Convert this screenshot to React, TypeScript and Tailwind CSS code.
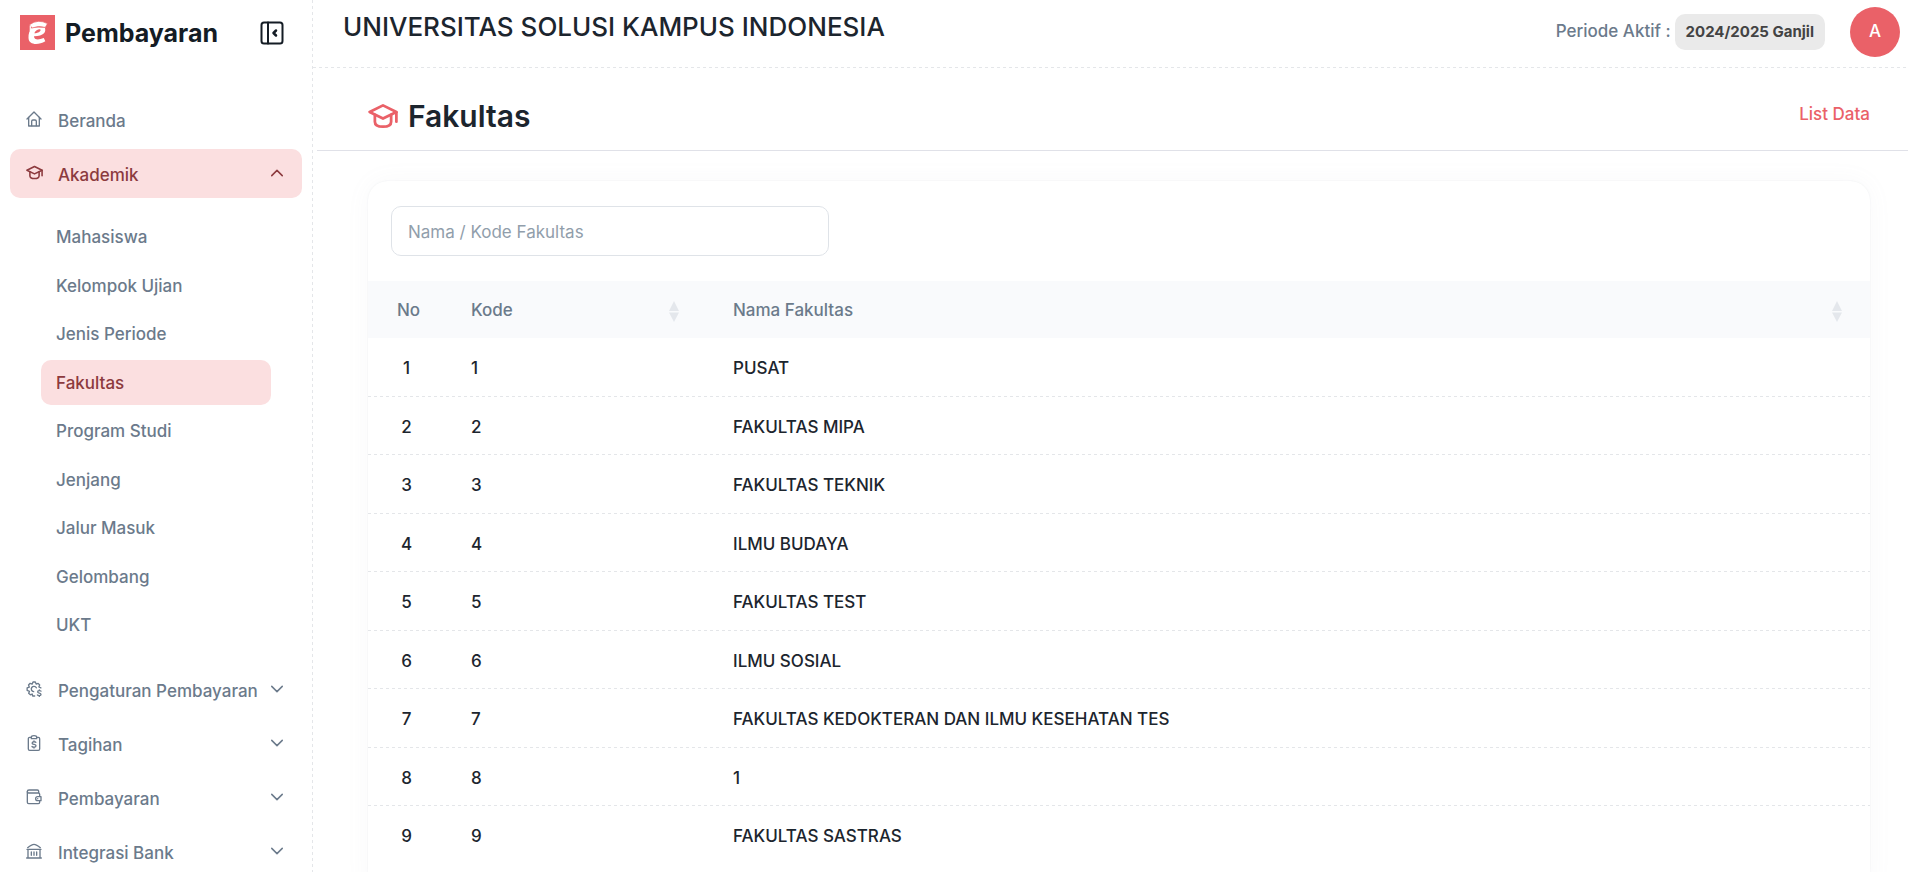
import { useState, type ReactNode } from "react";

function Svg({ className, width = 2, children }: { className: string; width?: number; children: ReactNode }) {
  return (
    <svg
      viewBox="0 0 24 24"
      className={className}
      fill="none"
      stroke="currentColor"
      strokeWidth={width}
      strokeLinecap="round"
      strokeLinejoin="round"
      aria-hidden="true"
    >
      {children}
    </svg>
  );
}

const HomeIcon = () => (
  <Svg className="size-4">
    <path d="M1.500 12 12 1.500 22.500 12" />
    <path d="M4 9.500V22.500h16V9.500" />
    <path d="M8.500 22V15.500q0-2 2-2h3q2 0 2 2V22" />
  </Svg>
);

const CapIcon = ({ className = "size-[17px]" }: { className?: string }) => (
  <Svg className={className} width={2.2}>
    <path d="M12 3.500 1.300 8.800 12 14l10.700-5.200z" />
    <path d="M5.500 11v5.500c0 2.800 3 4 6.500 4s6.500-1.200 6.500-4V11" />
    <path d="M22.700 9v7.500" />
  </Svg>
);

const GearMoneyIcon = () => (
  <Svg className="size-4">
    <path d="M13 22.500h-3l-.8-3-2.600 1.200-2.600-2.200 1.200-2.800-3.500-1.500v-4l3.300-1L3.800 6l2.400-2.500 3 1.200L10.500 1.500h3.500l1.200 3.200 3-1.200L20.500 6l-1.200 3 3 1.300" />
    <path d="M15.500 10.200a4 4 0 1 0-4 5.800" />
    <path d="M22.500 15.200c-1-1-5-1.200-5 1.200 0 2.200 5 1.300 5 3.700 0 2.300-4.200 2.200-5.300 1M20 13.300v1M20 22.500v1" />
  </Svg>
);

const ClipboardMoneyIcon = () => (
  <Svg className="size-4">
    <path d="M7.500 3.500H5.500a2 2 0 0 0-2 2V21a2 2 0 0 0 2 2h13a2 2 0 0 0 2-2V5.500a2 2 0 0 0-2-2h-2" />
    <path d="M8 5.500V3.500q0-2.500 4-2.500t4 2.500v2z" />
    <path d="M14.800 11c-1-1.300-5.600-1.300-5.600 1.200 0 2.600 5.800 1.400 5.800 4 0 2.500-4.800 2.500-6 1M12 8.800v1M12 18.500v1" />
  </Svg>
);

const WalletIcon = () => (
  <Svg className="size-4">
    <path d="M20.500 10V8a2 2 0 0 0-2-2H4a2 2 0 0 1-2-2.200C2 2.500 3 1.500 4.500 1.500H17a2 2 0 0 1 2 2V6" />
    <path d="M2 4v16a2 2 0 0 0 2 2h14.500a2 2 0 0 0 2-2v-1.500" />
    <path d="M22.500 11.500h-5a3 3 0 0 0 0 6h5zM17.500 14.500h.1" />
  </Svg>
);

const BankIcon = () => (
  <Svg className="size-4">
    <path d="M2.500 7Q5 4.800 9 2.800q3-1.600 6 0 4 2 6.500 4.200" />
    <path d="M1.500 9.500h21M3 9.500v12M21 9.500v12M1 22.500h22M8 13.500v5M12 13.500v5M16 13.500v5" />
  </Svg>
);

const Chevron = ({ up = false }: { up?: boolean }) => (
  <Svg className="size-[18px] shrink-0">{up ? <path d="m5 15.500 7-7 7 7" /> : <path d="m5 8.500 7 7 7-7" />}</Svg>
);

const BrandMark = () => (
  <svg viewBox="0 0 35 35" className="size-[35px] shrink-0" aria-hidden="true">
    <rect width="35" height="35" fill="#ea6168" />
    <path
      d="M24.800 12.500C26.500 17 24 21 14 21.200C14.200 24.800 18 25.300 23.800 23L25.300 26.300C18 30.500 8.800 30 8.500 23C8.300 19 9.500 15 12 12.500ZM14.300 18.300C18 18.300 21 16.500 20.500 14.800C20 13.600 15.500 14.800 14.300 18.300Z"
      fill="#fff"
      fillRule="evenodd"
    />
    <path
      d="M9.500 9.700Q18 3.500 27.500 8.600L25.300 12.400Q18 10.300 12 13Z"
      fill="#fff"
      stroke="#ea6168"
      strokeWidth="0.7"
    />
    <path d="M10.300 10.500v5.500" stroke="#fff" strokeWidth="1.200" />
  </svg>
);

const PanelIcon = () => (
  <Svg className="size-6">
    <rect x="1.500" y="1.500" width="21" height="21" rx="2.500" />
    <path d="M8 1.500v21" />
    <path d="m16 9.500-2.500 2.500 2.500 2.500" strokeWidth={2.5} />
  </Svg>
);

const submenu = [
  "Mahasiswa",
  "Kelompok Ujian",
  "Jenis Periode",
  "Fakultas",
  "Program Studi",
  "Jenjang",
  "Jalur Masuk",
  "Gelombang",
  "UKT",
];

const groups = [
  { label: "Pengaturan Pembayaran", icon: <GearMoneyIcon /> },
  { label: "Tagihan", icon: <ClipboardMoneyIcon /> },
  { label: "Pembayaran", icon: <WalletIcon /> },
  { label: "Integrasi Bank", icon: <BankIcon /> },
];

const rows = [
  { kode: "1", nama: "PUSAT" },
  { kode: "2", nama: "FAKULTAS MIPA" },
  { kode: "3", nama: "FAKULTAS TEKNIK" },
  { kode: "4", nama: "ILMU BUDAYA" },
  { kode: "5", nama: "FAKULTAS TEST" },
  { kode: "6", nama: "ILMU SOSIAL" },
  { kode: "7", nama: "FAKULTAS KEDOKTERAN DAN ILMU KESEHATAN TES" },
  { kode: "8", nama: "1" },
  { kode: "9", nama: "FAKULTAS SASTRAS" },
];

const itemClass = "flex h-[49px] w-full items-center rounded-[10px] px-4 pt-1 text-left whitespace-nowrap";
const iconClass = "flex w-8 shrink-0 pb-[6px]";

function DashedLine() {
  return (
    <div className="h-px shrink-0 bg-[repeating-linear-gradient(to_right,#e4e6e9_0_3px,transparent_3px_6px)]" />
  );
}

function Sidebar() {
  const [open, setOpen] = useState(true);
  return (
    <aside className="flex w-[312px] shrink-0 flex-col overflow-hidden">
      <div className="flex items-center pt-[15px] pr-7 pl-5">
        <BrandMark />
        <span className="ml-[10px] pt-[2px] text-[25px] leading-[33px] font-bold text-[#141c25]">Pembayaran</span>
        <button type="button" aria-label="Tutup menu" className="ml-auto text-[#141c25]">
          <PanelIcon />
        </button>
      </div>
      <nav className="mt-[45px] flex flex-col gap-[5px] px-[10px]">
        <a href="#beranda" className={itemClass}>
          <span className={iconClass}><HomeIcon /></span>
          Beranda
        </a>
        <button
          type="button"
          aria-expanded={open}
          onClick={() => setOpen(!open)}
          className="flex h-[49px] w-full items-center rounded-[10px] bg-[#fbdfe0] px-4 pt-1 text-left whitespace-nowrap text-[#8c3a3e]"
        >
          <span className={iconClass}><CapIcon /></span>
          Akademik
          <span className="ml-auto pb-[6px]"><Chevron up={open} /></span>
        </button>
        {open && (
          <ul className="flex flex-col gap-[3px] pt-[11px] pr-[31px] pb-[13px] pl-[31px]">
            {submenu.map((label) => (
              <li key={label}>
                <a
                  href={"#" + label}
                  aria-current={label === "Fakultas" ? "page" : undefined}
                  className="block rounded-[10px] px-[15px] pt-[11px] pb-[9px] leading-normal aria-[current=page]:bg-[#fbdfe0] aria-[current=page]:text-[#8c3a3e]"
                >
                  {label}
                </a>
              </li>
            ))}
          </ul>
        )}
        {groups.map((group) => (
          <button key={group.label} type="button" className={itemClass}>
            <span className={iconClass}>{group.icon}</span>
            {group.label}
            <span className="ml-auto pb-[6px]"><Chevron /></span>
          </button>
        ))}
      </nav>
    </aside>
  );
}

function SortButton({ label }: { label: string }) {
  return (
    <button type="button" className="flex w-full items-center justify-between">
      {label}
      <svg viewBox="0 0 10 21" className="h-[21px] w-[10px] fill-[#e4e7ec]" aria-hidden="true">
        <path d="M5 0 10 10H0zM0 11.500h10L5 21z" />
      </svg>
    </button>
  );
}

export default function App() {
  const [query, setQuery] = useState("");
  const shown = rows.filter((r) => (r.nama + " " + r.kode).toLowerCase().includes(query.toLowerCase()));

  return (
    <div className="flex h-screen overflow-hidden bg-white font-['Inter',sans-serif] text-[17px] font-medium text-[#6b7a8b]">
      <Sidebar />
      <div className="w-px shrink-0 bg-[repeating-linear-gradient(to_bottom,#e4e6e9_0_3px,transparent_3px_6px)]" />
      <div className="flex min-w-0 flex-1 flex-col">
        <header className="flex h-[67px] shrink-0 items-start justify-between pr-2 pl-[30px]">
          <h1 className="pt-[10px] text-[26px] leading-[34px] font-medium text-[#1c252e]">
            UNIVERSITAS SOLUSI KAMPUS INDONESIA
          </h1>
          <div className="flex items-center pt-[7px]">
            <span>Periode Aktif :</span>
            <span className="ml-1 rounded-[10px] bg-[#eaeaea] px-[11px] text-[15px] leading-9 font-bold text-[#434343]">
              2024/2025 Ganjil
            </span>
            <button type="button" className="ml-[25px] size-[50px] rounded-full bg-[#ea6168] font-medium text-white">
              A
            </button>
          </div>
        </header>
        <DashedLine />
        <main className="flex-1 overflow-y-auto pl-1 [scrollbar-width:none]">
          <div className="flex h-[83px] items-center justify-between border-b border-[#e0e1e8] pt-[14px] pr-[38px] pl-[51px]">
            <h2 className="flex items-center gap-[10px] text-[30px] leading-[42px] font-semibold text-[#1c252e]">
              <CapIcon className="size-[30px] text-[#ea6168]" />
              Fakultas
            </h2>
            <a href="#list" className="pb-[2px] text-[#ea6168]">List Data</a>
          </div>
          <section className="mt-[30px] mr-[38px] mb-8 ml-[51px] overflow-hidden rounded-[20px] bg-white pb-8 shadow-[0_0_2px_rgba(145,158,171,0.14),0_0_24px_rgba(145,158,171,0.06)]">
            <div className="px-[23px] py-[25px]">
              <input
                type="search"
                aria-label="Nama / Kode Fakultas"
                placeholder="Nama / Kode Fakultas"
                value={query}
                onChange={(e) => setQuery(e.target.value)}
                className="block h-[50px] w-full max-w-[438px] rounded-[10px] border border-[#dfe3e8] px-4 pt-[2px] font-normal text-[#1c252e] outline-none placeholder:text-[#919eab] focus:border-[#ea6168]"
              />
            </div>
            <table className="w-full table-fixed border-separate border-spacing-0 text-left">
              <thead className="bg-[#f9fafc]">
                <tr className="h-[57px]">
                  <th scope="col" className="w-[83px] pt-[3px] pl-[29px] font-medium">No</th>
                  <th scope="col" className="w-[262px] pt-[3px] pr-[34px] pl-5 font-medium"><SortButton label="Kode" /></th>
                  <th scope="col" className="pt-[3px] pr-7 pl-5 font-medium"><SortButton label="Nama Fakultas" /></th>
                </tr>
              </thead>
              <tbody className="text-[#1c252e]">
                {shown.map((row, i) => (
                  <tr
                    key={row.kode}
                    className="bg-[repeating-linear-gradient(to_right,#e4e6e9_0_3px,transparent_3px_6px)] bg-[length:100%_1px] bg-bottom bg-no-repeat last:bg-none"
                  >
                    <td className="pt-[18px] pr-[6px] pb-[15px] text-center leading-normal">{i + 1}</td>
                    <td className="pt-[18px] pb-[15px] pl-5 leading-normal">{row.kode}</td>
                    <td className="pt-[18px] pb-[15px] pl-5 leading-normal">{row.nama}</td>
                  </tr>
                ))}
              </tbody>
            </table>
          </section>
        </main>
      </div>
    </div>
  );
}
